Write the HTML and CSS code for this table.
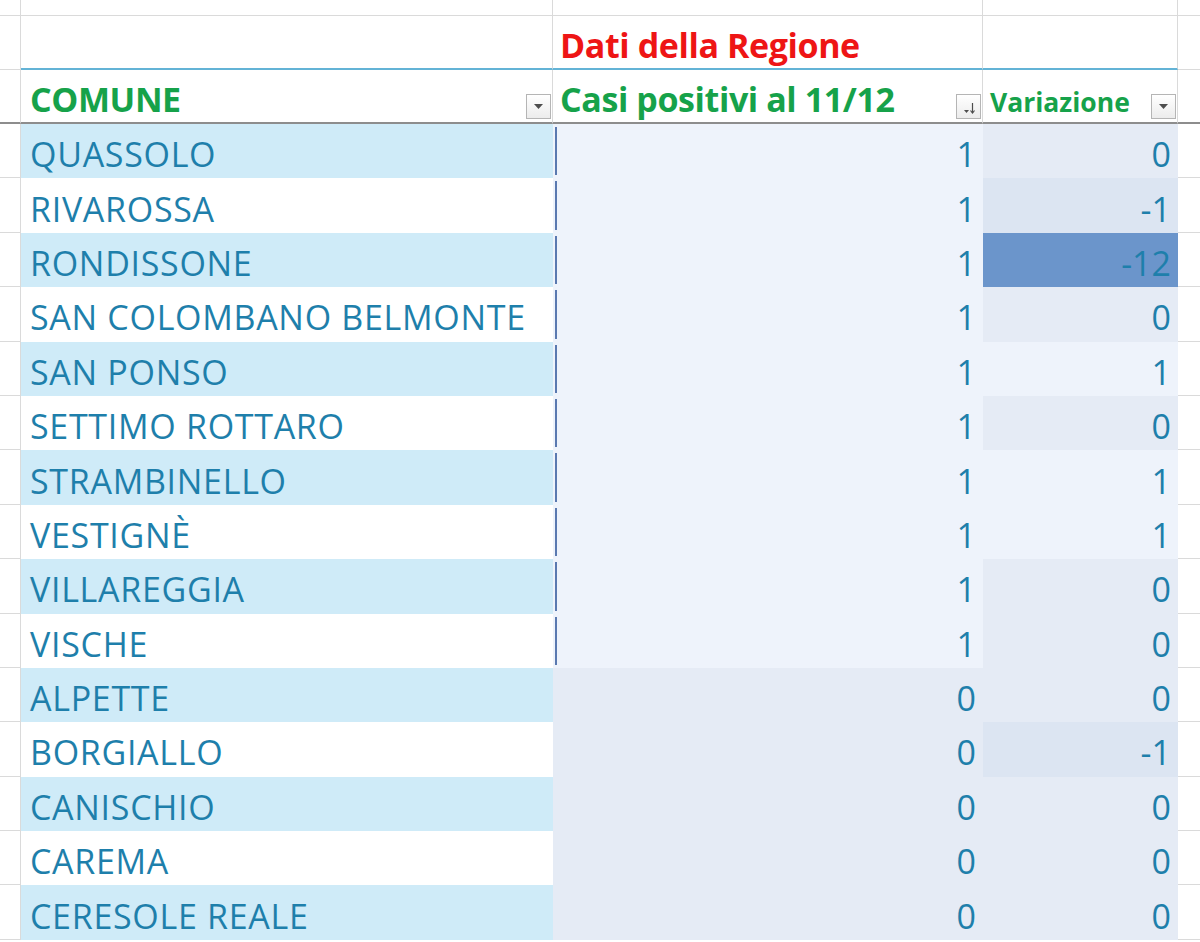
FILE: index.html
```html
<!DOCTYPE html>
<html lang="it">
<head>
<meta charset="utf-8">
<title>Dati della Regione</title>
<link rel="stylesheet" href="styles.css">
</head>
<body>
<div class="sheet">
  <div class="row row-top">
    <div class="c strip"></div><div class="c"></div><div class="c"></div><div class="c"></div><div class="c last"></div>
  </div>
  <div class="row head1">
    <div class="c strip"></div>
    <div class="c h1"></div>
    <div class="c h1"><span class="title-red">Dati della Regione</span></div>
    <div class="c h1"></div>
    <div class="c last"></div>
  </div>
  <div class="row head2">
    <div class="c strip"></div>
    <div class="c h2"><span class="title-green">COMUNE</span>
      <span class="fbtn"><svg width="11" height="7" viewBox="0 0 11 7"><path d="M1 1h9L5.5 6z" fill="#4d4d4d"/></svg></span></div>
    <div class="c h2"><span class="title-green">Casi positivi al 11/12</span>
      <span class="fbtn"><svg width="20" height="20" viewBox="0 0 20 20"><path d="M5 13h5l-2.5 3z" fill="#4d4d4d"/><path d="M13.5 6v10" stroke="#4d4d4d" stroke-width="1.2"/><path d="M11.5 13.5l2 2.5 2-2.5" stroke="#4d4d4d" stroke-width="1.2" fill="none"/></svg></span></div>
    <div class="c h2"><span class="title-green small">Variazione</span>
      <span class="fbtn"><svg width="11" height="7" viewBox="0 0 11 7"><path d="M1 1h9L5.5 6z" fill="#4d4d4d"/></svg></span></div>
    <div class="c last"></div>
  </div>

  <div class="row data">
    <div class="c strip"></div><div class="c name band">QUASSOLO</div>
    <div class="c num v1"><span class="axis"></span>1</div><div class="c num s0">0</div><div class="c last"></div>
  </div>
  <div class="row data">
    <div class="c strip"></div><div class="c name">RIVAROSSA</div>
    <div class="c num v1"><span class="axis"></span>1</div><div class="c num sm1">-1</div><div class="c last"></div>
  </div>
  <div class="row data">
    <div class="c strip"></div><div class="c name band">RONDISSONE</div>
    <div class="c num v1"><span class="axis"></span>1</div><div class="c num sm12">-12</div><div class="c last"></div>
  </div>
  <div class="row data">
    <div class="c strip"></div><div class="c name">SAN COLOMBANO BELMONTE</div>
    <div class="c num v1"><span class="axis"></span>1</div><div class="c num s0">0</div><div class="c last"></div>
  </div>
  <div class="row data">
    <div class="c strip"></div><div class="c name band">SAN PONSO</div>
    <div class="c num v1"><span class="axis"></span>1</div><div class="c num s1">1</div><div class="c last"></div>
  </div>
  <div class="row data">
    <div class="c strip"></div><div class="c name">SETTIMO ROTTARO</div>
    <div class="c num v1"><span class="axis"></span>1</div><div class="c num s0">0</div><div class="c last"></div>
  </div>
  <div class="row data">
    <div class="c strip"></div><div class="c name band">STRAMBINELLO</div>
    <div class="c num v1"><span class="axis"></span>1</div><div class="c num s1">1</div><div class="c last"></div>
  </div>
  <div class="row data">
    <div class="c strip"></div><div class="c name">VESTIGNÈ</div>
    <div class="c num v1"><span class="axis"></span>1</div><div class="c num s1">1</div><div class="c last"></div>
  </div>
  <div class="row data">
    <div class="c strip"></div><div class="c name band">VILLAREGGIA</div>
    <div class="c num v1"><span class="axis"></span>1</div><div class="c num s0">0</div><div class="c last"></div>
  </div>
  <div class="row data">
    <div class="c strip"></div><div class="c name">VISCHE</div>
    <div class="c num v1"><span class="axis"></span>1</div><div class="c num s0">0</div><div class="c last"></div>
  </div>
  <div class="row data">
    <div class="c strip"></div><div class="c name band">ALPETTE</div>
    <div class="c num v0">0</div><div class="c num s0">0</div><div class="c last"></div>
  </div>
  <div class="row data">
    <div class="c strip"></div><div class="c name">BORGIALLO</div>
    <div class="c num v0">0</div><div class="c num sm1">-1</div><div class="c last"></div>
  </div>
  <div class="row data">
    <div class="c strip"></div><div class="c name band">CANISCHIO</div>
    <div class="c num v0">0</div><div class="c num s0">0</div><div class="c last"></div>
  </div>
  <div class="row data">
    <div class="c strip"></div><div class="c name">CAREMA</div>
    <div class="c num v0">0</div><div class="c num s0">0</div><div class="c last"></div>
  </div>
  <div class="row data">
    <div class="c strip"></div><div class="c name band">CERESOLE REALE</div>
    <div class="c num v0">0</div><div class="c num s0">0</div><div class="c last"></div>
  </div>
</div>
</body>
</html>
```
FILE: styles.css
```css
html, body {
  margin: 0;
  padding: 0;
  background: #ffffff;
}
body {
  font-family: "Open Sans", "Liberation Sans", sans-serif;
  overflow: hidden;
}
.sheet {
  width: 1200px;
  display: flex;
  flex-direction: column;
}
.row {
  display: grid;
  grid-template-columns: 21px 532px 430px 195px 22px;
  height: 54px;
}
.row-top { height: 16px; }
.row.data { height: 54.4px; }
.c {
  box-sizing: border-box;
  border-right: 1px solid #dadada;
  border-bottom: 1px solid #dadada;
  min-width: 0;
}
.c.last { border-right: none; }
.head1 .h1 {
  border-bottom: 2px solid #63b3d6;
  display: flex;
  align-items: flex-end;
  padding: 0 0 3px 7px;
}
.head2 .c {
  border-bottom: 2px solid #8d8d8d;
}
.head2 .h2 {
  display: flex;
  align-items: flex-end;
  justify-content: space-between;
  padding: 0 1px 3px 7px;
}
.title-red {
  color: #ee1515;
  font-weight: 700;
  font-size: 34px;
  line-height: 40px;
  letter-spacing: -0.4px;
}
.title-green {
  color: #16a24a;
  font-weight: 700;
  font-size: 34px;
  line-height: 40px;
  letter-spacing: -0.4px;
}
.title-green.small {
  font-size: 26.5px;
  line-height: 32px;
  letter-spacing: 0;
  padding-bottom: 1px;
}
.head2 .c:nth-child(2) { padding-left: 9px; }
.fbtn {
  box-sizing: border-box;
  width: 25px;
  height: 25px;
  border: 1px solid #b5b5b5;
  background: linear-gradient(#ffffff, #ececec);
  display: flex;
  align-items: center;
  justify-content: center;
  flex: none;
}
.data .c {
  border: none;
  color: #1e7fab;
  font-size: 34px;
  letter-spacing: 0.7px;
  display: flex;
  align-items: center;
  padding-top: 6px;
}
.data .c.strip,
.data .c.last {
  border-bottom: 1px solid #dadada;
}
.data .c.strip { border-right: 1px solid #dadada; }
.data .name {
  padding-left: 9px;
  white-space: nowrap;
}
.data .band { background: #cfebf8; }
.data .num {
  justify-content: flex-end;
  padding-right: 7px;
  letter-spacing: 0;
}
.data .num .axis {
  width: 2px;
  align-self: stretch;
  margin: -3px auto 3px 2px;
  background: #5a79b0;
}
.v1 { background: #eef3fb; }
.v0 { background: #e5ebf5; }
.s0 { background: #e5ebf5; }
.s1 { background: #eef3fb; }
.sm1 { background: #dce5f2; }
.sm12 { background: #6b95cb; }
.data .num.s0, .data .num.s1, .data .num.sm1, .data .num.sm12 { padding-right: 7px; }
```
